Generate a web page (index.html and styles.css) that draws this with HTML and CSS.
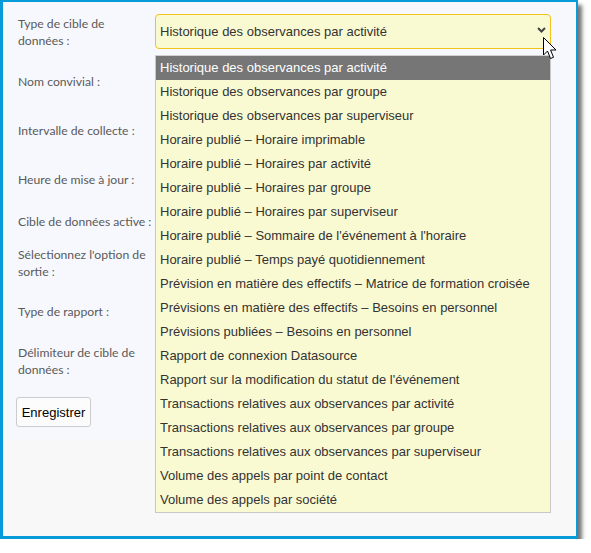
FILE: index.html
```html
<!DOCTYPE html>
<html lang="fr">
<head>
<meta charset="utf-8">
<title>Cible de données</title>
<link rel="stylesheet" href="styles.css">
</head>
<body>
<div class="frame">
  <form class="panel">
    <div class="row row-first">
      <label class="label">Type de cible de données :</label>
      <div class="field">
        <div class="select">
          <span class="select-value">Historique des observances par activité</span>
          <svg class="chevron" width="9" height="6" viewBox="0 0 9 6"><path d="M1 1 L4.5 4.5 L8 1" fill="none" stroke="#444" stroke-width="2"/></svg>
        </div>
      </div>
    </div>
    <div class="row"><label class="label">Nom convivial :</label><div class="field"></div></div>
    <div class="row"><label class="label">Intervalle de collecte :</label><div class="field"></div></div>
    <div class="row"><label class="label">Heure de mise à jour :</label><div class="field"></div></div>
    <div class="row row-check"><label class="label label-single">Cible de données active :</label><div class="field"></div></div>
    <div class="row"><label class="label">Sélectionnez l'option de sortie :</label><div class="field"></div></div>
    <div class="row"><label class="label">Type de rapport :</label><div class="field"></div></div>
    <div class="row row-last"><label class="label">Délimiteur de cible de données :</label><div class="field"></div></div>
    <div class="actions"><button type="button" class="btn">Enregistrer</button></div>

    <ul class="options">
      <li class="option selected">Historique des observances par activité</li>
      <li class="option">Historique des observances par groupe</li>
      <li class="option">Historique des observances par superviseur</li>
      <li class="option">Horaire publié – Horaire imprimable</li>
      <li class="option">Horaire publié – Horaires par activité</li>
      <li class="option">Horaire publié – Horaires par groupe</li>
      <li class="option">Horaire publié – Horaires par superviseur</li>
      <li class="option">Horaire publié – Sommaire de l'événement à l'horaire</li>
      <li class="option">Horaire publié – Temps payé quotidiennement</li>
      <li class="option">Prévision en matière des effectifs – Matrice de formation croisée</li>
      <li class="option">Prévisions en matière des effectifs – Besoins en personnel</li>
      <li class="option">Prévisions publiées – Besoins en personnel</li>
      <li class="option">Rapport de connexion Datasource</li>
      <li class="option">Rapport sur la modification du statut de l'événement</li>
      <li class="option">Transactions relatives aux observances par activité</li>
      <li class="option">Transactions relatives aux observances par groupe</li>
      <li class="option">Transactions relatives aux observances par superviseur</li>
      <li class="option">Volume des appels par point de contact</li>
      <li class="option">Volume des appels par société</li>
    </ul>

    <svg class="pointer" width="17" height="26" viewBox="0 0 17 26">
      <path d="M1.5 1.5 L1.5 19 L5.5 15 L8.5 22.5 L11.5 21.3 L8.6 14 L14 14 Z" fill="#fff" stroke="#000" stroke-width="1" stroke-linejoin="round"/>
    </svg>
  </form>
</div>
</body>
</html>
```
FILE: styles.css
```css
html, body {
  margin: 0;
  padding: 0;
  background: #ffffff;
}

.frame {
  box-sizing: border-box;
  width: 578px;
  height: 539px;
  border: 3px solid #079bda;
  border-right-width: 2px;
  border-top-width: 2px;
  background: #f8f8f8;
  box-shadow: 4px 5px 4px rgba(0, 0, 0, 0.55);
  padding-left: 7px;
}

.panel {
  position: relative;
  background: #f6f8fd;
  padding: 12px 0 13px 6px;
  display: flex;
  flex-direction: column;
  font-family: "Lato", "Liberation Sans", sans-serif;
}

.row {
  display: flex;
  align-items: center;
  height: 35px;
  margin-bottom: 14px;
}

.row-first { margin-bottom: 15px; }
.row-check { height: 20px; margin-bottom: 14px; }
.row-last { margin-bottom: 19px; }

.label {
  box-sizing: border-box;
  width: 139px;
  padding-left: 2px;
  padding-right: 4px;
  color: #5a5a5a;
  font-size: 12.2px;
  line-height: 17px;
}

.label-single {
  white-space: nowrap;
}

.field {
  width: 396px;
}

.select {
  box-sizing: border-box;
  height: 35px;
  border: 1px solid #f2c31c;
  border-radius: 4px;
  background: #fafad2;
  display: flex;
  align-items: center;
  justify-content: space-between;
  padding: 0 4px 0 4px;
  font-family: "Liberation Sans", Arial, sans-serif;
  font-size: 13px;
  color: #333333;
}

.chevron {
  margin-top: -3px;
}

.actions {
  display: flex;
}

.btn {
  box-sizing: border-box;
  width: 75px;
  height: 30px;
  border: 1px solid #cccccc;
  border-radius: 3px;
  background: #fcfcfc;
  font-family: "Liberation Sans", Arial, sans-serif;
  font-size: 13px;
  color: #000000;
  padding: 0;
}

.options {
  position: absolute;
  left: 145px;
  top: 53px;
  width: 396px;
  box-sizing: border-box;
  margin: 0;
  padding: 0;
  list-style: none;
  background: #fafad2;
  border: 1px solid #c8c8c8;
  border-top-color: #d0d0d0;
  font-family: "Liberation Sans", Arial, sans-serif;
  font-size: 13px;
  color: #333333;
}

.option {
  height: 24px;
  line-height: 24px;
  padding-left: 4px;
  white-space: nowrap;
}

.option.selected {
  background: #767676;
  color: #ffffff;
}

.pointer {
  position: absolute;
  left: 532px;
  top: 34px;
}
```
